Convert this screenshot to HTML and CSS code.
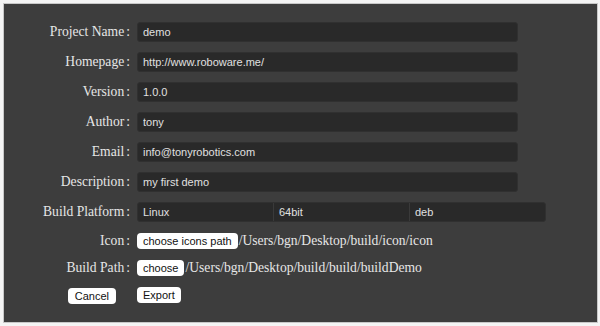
FILE: index.html
```html
<!DOCTYPE html>
<html lang="en">
<head>
  <meta charset="UTF-8">
  <title>Export Project</title>
  <link rel="stylesheet" href="styles.css">
</head>
<body>
  <div class="panel">
    <form class="export-form">
      <label class="field-label">Project Name<span class="colon">:</span></label>
      <input class="field-input" type="text" value="demo">

      <label class="field-label">Homepage<span class="colon">:</span></label>
      <input class="field-input" type="text" value="http://www.roboware.me/">

      <label class="field-label">Version<span class="colon">:</span></label>
      <input class="field-input" type="text" value="1.0.0">

      <label class="field-label">Author<span class="colon">:</span></label>
      <input class="field-input" type="text" value="tony">

      <label class="field-label">Email<span class="colon">:</span></label>
      <input class="field-input" type="text" value="info@tonyrobotics.com">

      <label class="field-label">Description<span class="colon">:</span></label>
      <input class="field-input" type="text" value="my first demo">

      <label class="field-label">Build Platform<span class="colon">:</span></label>
      <div class="platform">
        <div class="platform-cell">Linux</div>
        <div class="platform-cell">64bit</div>
        <div class="platform-cell">deb</div>
      </div>

      <label class="field-label">Icon<span class="colon">:</span></label>
      <div class="path-row">
        <button type="button" class="btn">choose icons path</button>
        <span class="path-text">/Users/bgn/Desktop/build/icon/icon</span>
      </div>

      <label class="field-label">Build Path<span class="colon">:</span></label>
      <div class="path-row">
        <button type="button" class="btn">choose</button>
        <span class="path-text">/Users/bgn/Desktop/build/build/buildDemo</span>
      </div>

      <div class="cancel-cell">
        <button type="button" class="btn">Cancel</button>
      </div>
      <div class="path-row">
        <button type="button" class="btn">Export</button>
      </div>
    </form>
  </div>
</body>
</html>
```

FILE: styles.css
```css
* {
  box-sizing: border-box;
  margin: 0;
  padding: 0;
}

body {
  background: #f4f4f4;
  width: 600px;
  height: 326px;
  overflow: hidden;
}

.panel {
  margin: 4px 0 0 4px;
  width: 593px;
  height: 318px;
  background: #3d3d3d;
  box-shadow: 0 0 0 1px #c8c8c8;
  padding-top: 13px;
}

.export-form {
  display: grid;
  grid-template-columns: 126px 409px;
  grid-template-rows: repeat(7, 30px) repeat(3, 27px);
  column-gap: 7px;
  align-items: center;
}

.field-label {
  text-align: right;
  font-family: 'Liberation Serif', 'Times New Roman', serif;
  font-size: 13.6px;
  color: #e6e6e6;
}

.colon {
  margin-left: 2px;
}

.field-input {
  width: 381px;
  height: 20px;
  background: #292929;
  border: 1px solid #303030;
  border-radius: 3px;
  padding: 0 5px;
  font-family: 'Liberation Sans', Arial, sans-serif;
  font-size: 11px;
  color: #e0e0e0;
  outline: none;
}

.platform {
  display: flex;
  width: 409px;
  height: 20px;
  background: #292929;
  border: 1px solid #303030;
  border-radius: 3px;
}

.platform-cell {
  flex: 1;
  padding-left: 5px;
  line-height: 18px;
  font-family: 'Liberation Sans', Arial, sans-serif;
  font-size: 11px;
  color: #e0e0e0;
}

.platform-cell + .platform-cell {
  border-left: 1px solid #3a3a3a;
}

.path-row {
  display: flex;
  align-items: center;
  gap: 1px;
}

.path-text {
  font-family: 'Liberation Serif', 'Times New Roman', serif;
  font-size: 13.6px;
  color: #e6e6e6;
}

.btn {
  height: 16px;
  padding: 0 6px;
  background: #ffffff;
  border: none;
  border-radius: 4px;
  font-family: 'Liberation Sans', Arial, sans-serif;
  font-size: 11px;
  color: #111;
  cursor: pointer;
}

.cancel-cell {
  text-align: right;
  padding-right: 14px;
}

.cancel-cell .btn {
  padding: 0 7px;
}
```
